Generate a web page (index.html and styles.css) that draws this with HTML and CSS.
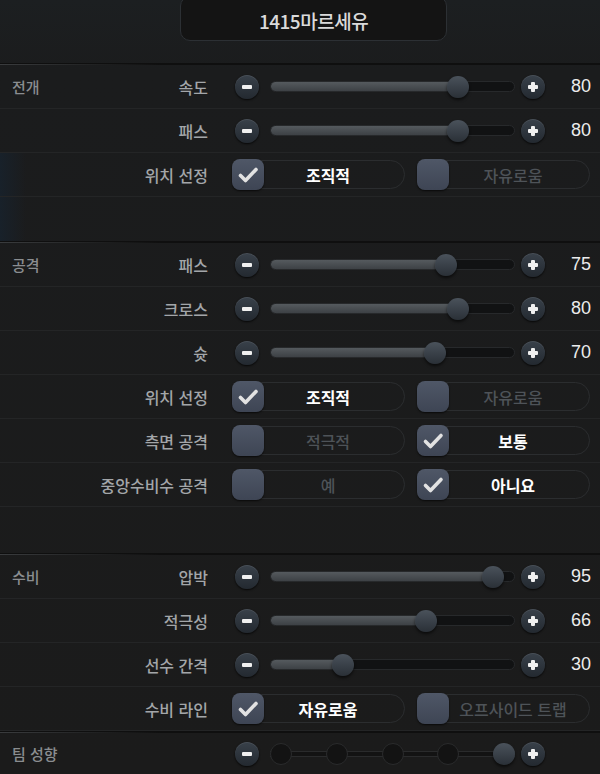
FILE: index.html
```html
<!DOCTYPE html>
<html lang="ko">
<head>
    <meta charset="UTF-8">
    <meta name="viewport" content="width=device-width, initial-scale=1.0">
    <title>팀 전술</title>
    <link rel="stylesheet" href="styles.css">
</head>
<body>
<div class="screen">

    <header class="title-bar">
        <div class="title">1415마르세유</div>
    </header>

    <!-- 전개 -->
    <section class="group">
        <div class="divider"></div>
        <div class="row">
            <div class="head"><span class="group-name">전개</span><span class="label">속도</span></div>
            <div class="slider">
                <span class="btn"><svg viewBox="0 0 24 24"><rect x="7" y="10" width="10" height="4" rx="1"/></svg></span>
                <div class="track"><div class="fill" style="width: 77%"></div><div class="thumb" style="left: 77%"></div></div>
                <span class="btn btn--plus"><svg viewBox="0 0 24 24"><rect x="7" y="10" width="10" height="4" rx="1"/><rect x="10" y="7" width="4" height="10" rx="1"/></svg></span>
                <span class="value">80</span>
            </div>
        </div>
        <div class="row">
            <div class="head"><span class="group-name"></span><span class="label">패스</span></div>
            <div class="slider">
                <span class="btn"><svg viewBox="0 0 24 24"><rect x="7" y="10" width="10" height="4" rx="1"/></svg></span>
                <div class="track"><div class="fill" style="width: 77%"></div><div class="thumb" style="left: 77%"></div></div>
                <span class="btn btn--plus"><svg viewBox="0 0 24 24"><rect x="7" y="10" width="10" height="4" rx="1"/><rect x="10" y="7" width="4" height="10" rx="1"/></svg></span>
                <span class="value">80</span>
            </div>
        </div>
        <div class="row tinted">
            <div class="head"><span class="group-name"></span><span class="label">위치 선정</span></div>
            <div class="choice">
                <div class="option option--on"><span class="box"><svg viewBox="0 0 24 24"><path d="M4.5 12.5l5 5L20 6.5"/></svg></span><span class="option__text">조직적</span></div>
                <div class="option"><span class="box"></span><span class="option__text">자유로움</span></div>
            </div>
        </div>
        <div class="spacer spacer--first tinted"></div>
    </section>

    <!-- 공격 -->
    <section class="group">
        <div class="divider"></div>
        <div class="row">
            <div class="head"><span class="group-name">공격</span><span class="label">패스</span></div>
            <div class="slider">
                <span class="btn"><svg viewBox="0 0 24 24"><rect x="7" y="10" width="10" height="4" rx="1"/></svg></span>
                <div class="track"><div class="fill" style="width: 72.2%"></div><div class="thumb" style="left: 72.2%"></div></div>
                <span class="btn btn--plus"><svg viewBox="0 0 24 24"><rect x="7" y="10" width="10" height="4" rx="1"/><rect x="10" y="7" width="4" height="10" rx="1"/></svg></span>
                <span class="value">75</span>
            </div>
        </div>
        <div class="row">
            <div class="head"><span class="group-name"></span><span class="label">크로스</span></div>
            <div class="slider">
                <span class="btn"><svg viewBox="0 0 24 24"><rect x="7" y="10" width="10" height="4" rx="1"/></svg></span>
                <div class="track"><div class="fill" style="width: 77%"></div><div class="thumb" style="left: 77%"></div></div>
                <span class="btn btn--plus"><svg viewBox="0 0 24 24"><rect x="7" y="10" width="10" height="4" rx="1"/><rect x="10" y="7" width="4" height="10" rx="1"/></svg></span>
                <span class="value">80</span>
            </div>
        </div>
        <div class="row">
            <div class="head"><span class="group-name"></span><span class="label">슛</span></div>
            <div class="slider">
                <span class="btn"><svg viewBox="0 0 24 24"><rect x="7" y="10" width="10" height="4" rx="1"/></svg></span>
                <div class="track"><div class="fill" style="width: 67.5%"></div><div class="thumb" style="left: 67.5%"></div></div>
                <span class="btn btn--plus"><svg viewBox="0 0 24 24"><rect x="7" y="10" width="10" height="4" rx="1"/><rect x="10" y="7" width="4" height="10" rx="1"/></svg></span>
                <span class="value">70</span>
            </div>
        </div>
        <div class="row">
            <div class="head"><span class="group-name"></span><span class="label">위치 선정</span></div>
            <div class="choice">
                <div class="option option--on"><span class="box"><svg viewBox="0 0 24 24"><path d="M4.5 12.5l5 5L20 6.5"/></svg></span><span class="option__text">조직적</span></div>
                <div class="option"><span class="box"></span><span class="option__text">자유로움</span></div>
            </div>
        </div>
        <div class="row">
            <div class="head"><span class="group-name"></span><span class="label">측면 공격</span></div>
            <div class="choice">
                <div class="option"><span class="box"></span><span class="option__text">적극적</span></div>
                <div class="option option--on"><span class="box"><svg viewBox="0 0 24 24"><path d="M4.5 12.5l5 5L20 6.5"/></svg></span><span class="option__text">보통</span></div>
            </div>
        </div>
        <div class="row">
            <div class="head"><span class="group-name"></span><span class="label">중앙수비수 공격</span></div>
            <div class="choice">
                <div class="option"><span class="box"></span><span class="option__text">예</span></div>
                <div class="option option--on"><span class="box"><svg viewBox="0 0 24 24"><path d="M4.5 12.5l5 5L20 6.5"/></svg></span><span class="option__text">아니요</span></div>
            </div>
        </div>
        <div class="spacer"></div>
    </section>

    <!-- 수비 -->
    <section class="group">
        <div class="divider"></div>
        <div class="row">
            <div class="head"><span class="group-name">수비</span><span class="label">압박</span></div>
            <div class="slider">
                <span class="btn"><svg viewBox="0 0 24 24"><rect x="7" y="10" width="10" height="4" rx="1"/></svg></span>
                <div class="track"><div class="fill" style="width: 91.2%"></div><div class="thumb" style="left: 91.2%"></div></div>
                <span class="btn btn--plus"><svg viewBox="0 0 24 24"><rect x="7" y="10" width="10" height="4" rx="1"/><rect x="10" y="7" width="4" height="10" rx="1"/></svg></span>
                <span class="value">95</span>
            </div>
        </div>
        <div class="row">
            <div class="head"><span class="group-name"></span><span class="label">적극성</span></div>
            <div class="slider">
                <span class="btn"><svg viewBox="0 0 24 24"><rect x="7" y="10" width="10" height="4" rx="1"/></svg></span>
                <div class="track"><div class="fill" style="width: 63.7%"></div><div class="thumb" style="left: 63.7%"></div></div>
                <span class="btn btn--plus"><svg viewBox="0 0 24 24"><rect x="7" y="10" width="10" height="4" rx="1"/><rect x="10" y="7" width="4" height="10" rx="1"/></svg></span>
                <span class="value">66</span>
            </div>
        </div>
        <div class="row">
            <div class="head"><span class="group-name"></span><span class="label">선수 간격</span></div>
            <div class="slider">
                <span class="btn"><svg viewBox="0 0 24 24"><rect x="7" y="10" width="10" height="4" rx="1"/></svg></span>
                <div class="track"><div class="fill" style="width: 29.6%"></div><div class="thumb" style="left: 29.6%"></div></div>
                <span class="btn btn--plus"><svg viewBox="0 0 24 24"><rect x="7" y="10" width="10" height="4" rx="1"/><rect x="10" y="7" width="4" height="10" rx="1"/></svg></span>
                <span class="value">30</span>
            </div>
        </div>
        <div class="row">
            <div class="head"><span class="group-name"></span><span class="label">수비 라인</span></div>
            <div class="choice">
                <div class="option option--on"><span class="box"><svg viewBox="0 0 24 24"><path d="M4.5 12.5l5 5L20 6.5"/></svg></span><span class="option__text">자유로움</span></div>
                <div class="option"><span class="box"></span><span class="option__text">오프사이드 트랩</span></div>
            </div>
        </div>
        <div class="divider"></div>
        <div class="row row--last">
            <div class="head"><span class="group-name">팀 성향</span><span class="label"></span></div>
            <div class="slider">
                <span class="btn"><svg viewBox="0 0 24 24"><rect x="7" y="10" width="10" height="4" rx="1"/></svg></span>
                <div class="notches">
                    <span class="notch"></span>
                    <span class="notch"></span>
                    <span class="notch"></span>
                    <span class="notch"></span>
                    <span class="notch notch--on"></span>
                </div>
                <span class="btn btn--plus"><svg viewBox="0 0 24 24"><rect x="7" y="10" width="10" height="4" rx="1"/><rect x="10" y="7" width="4" height="10" rx="1"/></svg></span>
            </div>
        </div>
    </section>

</div>
</body>
</html>
```

FILE: styles.css
```css
/* General styles */
* {
    box-sizing: border-box;
}
body {
    margin: 0;
    background: #1b1b1b;
    font-family: "Noto Sans CJK KR", "Noto Sans", sans-serif;
    color: #a5a8ab;
}
.screen {
    width: 600px;
    height: 774px;
    overflow: hidden;
    background: linear-gradient(#1c1f21, #1b1c1d 70px, #1b1b1b);
}

/* Title */
.title-bar {
    display: flex;
    align-items: flex-start;
    height: 63px;
    padding-left: 180px;
}
.title {
    width: 267px;
    height: 45px;
    margin-top: -4px;
    padding-top: 4px;
    border: 1px solid #2c3034;
    border-radius: 10px;
    background: #141414;
    display: flex;
    align-items: center;
    justify-content: center;
    font-size: 19px;
    font-weight: 500;
    color: #dadada;
    letter-spacing: -0.5px;
}

/* Sections */
.divider {
    height: 2px;
    background:
        linear-gradient(90deg, #3a3c3e, rgba(58, 60, 62, 0) 160px) 0 1px / 100% 1px no-repeat,
        #0f0f0f;
}
.spacer {
    height: 46px;
}
.spacer--first {
    height: 44px;
}
.tinted {
    background: linear-gradient(90deg, #18212a, rgba(27, 27, 27, 0) 26px);
}
.row {
    display: grid;
    grid-template-columns: 220px 1fr;
    align-items: center;
    height: 44px;
    border-bottom: 1px solid #242526;
}
.row--last {
    height: 41px;
    border-bottom: none;
}
.head {
    display: flex;
    justify-content: space-between;
    align-items: center;
    padding: 0 12px;
}
.group-name {
    font-size: 15px;
    font-weight: 500;
    color: #8a8d90;
}
.label {
    font-size: 16px;
    font-weight: 500;
    color: #a3a6a9;
}

/* Slider */
.slider {
    display: flex;
    align-items: center;
    padding-left: 15px;
}
.btn {
    flex: none;
    width: 24px;
    height: 24px;
    border-radius: 50%;
    background: linear-gradient(#39414a, #232930);
    box-shadow: 0 1px 2px rgba(0, 0, 0, 0.8), inset 0 1px 0 rgba(255, 255, 255, 0.08);
}
.btn svg {
    display: block;
    width: 24px;
    height: 24px;
    fill: #f0f0f0;
}
.btn--plus {
    margin-left: 6px;
}
.track {
    position: relative;
    width: 245px;
    height: 11px;
    margin-left: 11px;
    border-radius: 6px;
    background: #111213;
    border: 1px solid #27292b;
}
.fill {
    height: 100%;
    border-radius: 6px;
    background: linear-gradient(#555a5e, #3d4145);
}
.thumb {
    position: absolute;
    top: 50%;
    width: 22px;
    height: 22px;
    margin: -11px 0 0 -11px;
    border-radius: 50%;
    background: linear-gradient(#4a525b, #2a3037);
    box-shadow: 0 2px 3px rgba(0, 0, 0, 0.6);
}
.value {
    margin-left: auto;
    padding-right: 9px;
    font-family: "Liberation Sans", sans-serif;
    font-size: 18px;
    color: #ececec;
}

/* Team tendency */
.notches {
    display: flex;
    justify-content: space-between;
    align-items: center;
    width: 245px;
    height: 22px;
    margin-left: 11px;
    background: linear-gradient(transparent 8px, #2a2b2c 8px, #2a2b2c 9px, #131313 9px, #131313 13px, #2a2b2c 13px, #2a2b2c 14px, transparent 14px);
}
.notch {
    width: 22px;
    height: 22px;
    border-radius: 50%;
    background: #131313;
    border: 1px solid #2a2b2c;
}
.notch--on {
    border: none;
    background: linear-gradient(#4a525b, #2a3037);
    box-shadow: 0 2px 3px rgba(0, 0, 0, 0.6);
}

/* Choice options */
.choice {
    display: flex;
    gap: 12px;
    padding-left: 12px;
}
.option {
    display: flex;
    align-items: center;
    width: 173px;
    height: 29px;
    border: 1px solid #2b2d2f;
    border-radius: 15px;
}
.box {
    flex: none;
    display: flex;
    align-items: center;
    justify-content: center;
    width: 32px;
    height: 31px;
    margin-left: -1px;
    border-radius: 8px;
    background: linear-gradient(#4f5767, #3e4554);
    box-shadow: 0 1px 2px rgba(0, 0, 0, 0.7);
}
.box svg {
    width: 24px;
    height: 24px;
    fill: none;
    stroke: #e2e2e2;
    stroke-width: 3.6;
    stroke-linecap: round;
    stroke-linejoin: round;
}
.option__text {
    flex: 1;
    padding-right: 12px;
    text-align: center;
    font-size: 16px;
    font-weight: 500;
    color: #4e5358;
}
.option--on .option__text {
    color: #ffffff;
    font-weight: bold;
}
```
